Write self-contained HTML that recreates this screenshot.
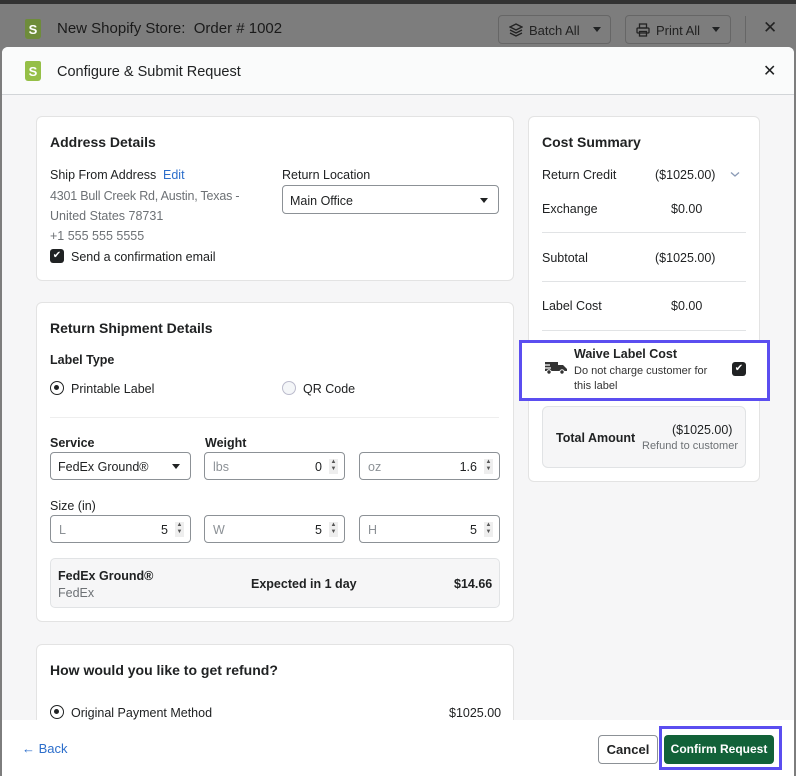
<!DOCTYPE html>
<html><head><meta charset="utf-8"><style>
*{box-sizing:border-box;margin:0;padding:0}
body{width:796px;height:776px;overflow:hidden;background:#7d7d7d;font-family:"Liberation Sans",sans-serif;color:#202223;position:relative;font-size:12.5px}
.a{position:absolute}
.card{position:absolute;background:#fff;border:1px solid #e3e3e3;border-radius:6px}
.h{font-weight:bold;font-size:14px}
.b{font-weight:bold}
.in{position:absolute;border:1px solid #8c9196;border-radius:4px;background:#fff;height:28px}
.ph{position:absolute;left:8px;top:7px;color:#8c9196}
.v{position:absolute;right:22px;top:7px}
.sp{position:absolute;right:6px;top:6px;width:9px;height:15px;background:#eee;font-size:6px;line-height:7px;text-align:center;color:#555}
.caret{position:absolute;width:0;height:0;border-left:4px solid transparent;border-right:4px solid transparent;border-top:5px solid #202223}
.gray{color:#6d7175}
.line{position:absolute;height:1px;background:#e1e3e5}
.logo{position:absolute;width:16px;height:20px;background:#95bf47;border-radius:2px 2px 3px 3px;color:#fff;font-weight:bold;font-size:13px;text-align:center;line-height:21px}
</style></head><body>
<div class="a" style="left:0;top:0;width:796px;height:4px;background:#333"></div>
<div class="logo" style="left:25px;top:19px;background:#6e8c3a">S</div>
<div class="a" style="left:57px;top:20px;font-size:15px;color:#1a1a1a">New Shopify Store:&nbsp; Order # 1002</div>
<div class="a" style="left:498px;top:15px;width:113px;height:29px;border:1px solid #666;border-radius:4px;"><span class="a" style="left:30px;top:7px;font-size:13px;color:#222">Batch All</span><svg class="a" style="left:10px;top:7px" width="14" height="14" viewBox="0 0 14 14" fill="none" stroke="#222" stroke-width="1.3"><path d="M7 1L13 4L7 7L1 4Z"/><path d="M1 7L7 10L13 7"/><path d="M1 10L7 13L13 10"/></svg><div class="caret" style="left:94px;top:11px"></div></div>
<div class="a" style="left:625px;top:15px;width:106px;height:29px;border:1px solid #666;border-radius:4px;"><span class="a" style="left:30px;top:7px;font-size:13px;color:#222">Print All</span><svg class="a" style="left:10px;top:7px" width="14" height="14" viewBox="0 0 14 14" fill="none" stroke="#222" stroke-width="1.3"><rect x="3.5" y="1" width="7" height="4"/><rect x="1" y="5" width="12" height="5" rx="1"/><rect x="3.5" y="8.5" width="7" height="4.5"/></svg><div class="caret" style="left:86px;top:11px"></div></div>
<div class="a" style="left:745px;top:16px;width:1px;height:27px;background:#666"></div>
<div class="a" style="left:763px;top:18px;font-size:17px;color:#222">✕</div>

<div class="a" style="left:2px;top:47px;width:792px;height:729px;background:#f6f6f7;border-radius:6px 6px 0 0;overflow:hidden">
 <div class="a" style="left:0;top:0;width:792px;height:48px;background:#fafbfb;border-bottom:1px solid #d2d5d8"></div>
</div>
<div class="logo" style="left:25px;top:61px">S</div>
<div class="a" style="left:57px;top:64px;font-size:14.5px">Configure &amp; Submit Request</div>
<div class="a" style="left:763px;top:61px;font-size:16px">✕</div>

<div class="card" style="left:36px;top:116px;width:478px;height:165px"></div>
<div class="a h" style="left:50px;top:134px">Address Details</div>
<div class="a" style="left:50px;top:168px">Ship From Address</div>
<div class="a" style="left:163px;top:168px;color:#2c6ecb">Edit</div>
<div class="a gray" style="left:50px;top:189px;letter-spacing:-0.2px">4301 Bull Creek Rd, Austin, Texas -</div>
<div class="a gray" style="left:50px;top:209px">United States 78731</div>
<div class="a gray" style="left:50px;top:229px">+1 555 555 5555</div>
<div class="a" style="left:50px;top:249px;width:14px;height:14px;background:#202223;border-radius:3px;color:#fff;font-size:10px;text-align:center;line-height:14px">✔</div>
<div class="a" style="left:71px;top:250px">Send a confirmation email</div>
<div class="a" style="left:282px;top:168px">Return Location</div>
<div class="in" style="left:282px;top:185px;width:217px;height:29px"><span class="a" style="left:7px;top:8px">Main Office</span><div class="caret" style="right:10px;top:12px"></div></div>

<div class="card" style="left:36px;top:302px;width:478px;height:320px"></div>
<div class="a h" style="left:50px;top:320px">Return Shipment Details</div>
<div class="a b" style="left:50px;top:353px">Label Type</div>
<div class="a" style="left:50px;top:381px;width:14px;height:14px;border:1.5px solid #202223;border-radius:50%"><div class="a" style="left:3px;top:3px;width:5px;height:5px;background:#202223;border-radius:50%"></div></div>
<div class="a" style="left:71px;top:382px">Printable Label</div>
<div class="a" style="left:282px;top:381px;width:14px;height:14px;border:1px solid #bbc;border-radius:50%;background:#f4f6f8"></div>
<div class="a" style="left:303px;top:382px">QR Code</div>
<div class="line" style="left:50px;top:417px;width:449px;background:#eee"></div>
<div class="a b" style="left:50px;top:436px">Service</div>
<div class="a b" style="left:205px;top:436px">Weight</div>
<div class="in" style="left:50px;top:452px;width:141px"><span class="a" style="left:7px;top:7px">FedEx Ground®</span><div class="caret" style="right:10px;top:11px"></div></div>
<div class="in" style="left:204px;top:452px;width:141px"><span class="ph">lbs</span><span class="v">0</span><div class="sp">▲<br>▼</div></div>
<div class="in" style="left:359px;top:452px;width:141px"><span class="ph">oz</span><span class="v">1.6</span><div class="sp">▲<br>▼</div></div>
<div class="a" style="left:50px;top:499px">Size (in)</div>
<div class="in" style="left:50px;top:515px;width:141px"><span class="ph">L</span><span class="v">5</span><div class="sp">▲<br>▼</div></div>
<div class="in" style="left:204px;top:515px;width:141px"><span class="ph">W</span><span class="v">5</span><div class="sp">▲<br>▼</div></div>
<div class="in" style="left:359px;top:515px;width:141px"><span class="ph">H</span><span class="v">5</span><div class="sp">▲<br>▼</div></div>
<div class="a" style="left:50px;top:558px;width:450px;height:50px;background:#f6f6f7;border:1px solid #e1e3e5;border-radius:5px"></div>
<div class="a b" style="left:58px;top:569px">FedEx Ground®</div>
<div class="a gray" style="left:58px;top:586px">FedEx</div>
<div class="a b" style="left:251px;top:577px">Expected in 1 day</div>
<div class="a b" style="left:454px;top:577px">$14.66</div>

<div class="card" style="left:36px;top:644px;width:478px;height:100px"></div>
<div class="a h" style="left:50px;top:662px">How would you like to get refund?</div>
<div class="a" style="left:50px;top:705px;width:14px;height:14px;border:1.5px solid #202223;border-radius:50%"><div class="a" style="left:3px;top:3px;width:5px;height:5px;background:#202223;border-radius:50%"></div></div>
<div class="a" style="left:71px;top:706px">Original Payment Method</div>
<div class="a" style="left:449px;top:706px">$1025.00</div>

<div class="card" style="left:528px;top:116px;width:232px;height:366px"></div>
<div class="a h" style="left:542px;top:134px">Cost Summary</div>
<div class="a" style="left:542px;top:168px">Return Credit</div>
<div class="a" style="left:655px;top:168px">($1025.00)</div>
<svg class="a" style="left:730px;top:171px" width="10" height="7" viewBox="0 0 10 7" fill="none" stroke="#8a9ab5" stroke-width="1.3"><path d="M1 1.5L5 5L9 1.5"/></svg>
<div class="a" style="left:542px;top:202px">Exchange</div>
<div class="a" style="left:671px;top:202px">$0.00</div>
<div class="line" style="left:542px;top:232px;width:204px"></div>
<div class="a" style="left:542px;top:251px">Subtotal</div>
<div class="a" style="left:655px;top:251px">($1025.00)</div>
<div class="line" style="left:542px;top:281px;width:204px"></div>
<div class="a" style="left:542px;top:299px">Label Cost</div>
<div class="a" style="left:671px;top:299px">$0.00</div>
<div class="line" style="left:542px;top:330px;width:204px"></div>
<div class="a" style="left:519px;top:340px;width:251px;height:61px;background:#fff;border:3px solid #5b4ef0"></div>
<svg class="a" style="left:542px;top:361px" width="26" height="14" viewBox="0 0 26 14"><path d="M3 1H16V10H3Z M16 4H21L25 8V10H16Z" fill="#333"/><path d="M0 4H8M1 7H9" stroke="#fff" stroke-width="1.2"/><circle cx="7" cy="11" r="2.2" fill="#333" stroke="#fff"/><circle cx="20" cy="11" r="2.2" fill="#333" stroke="#fff"/></svg>
<div class="a b" style="left:574px;top:347px">Waive Label Cost</div>
<div class="a" style="left:574px;top:364px;font-size:11px;line-height:15px;color:#333;width:150px">Do not charge customer for this label</div>
<div class="a" style="left:732px;top:362px;width:14px;height:14px;background:#202223;border-radius:3px;color:#fff;font-size:10px;text-align:center;line-height:14px">✔</div>
<div class="a" style="left:542px;top:406px;width:204px;height:62px;background:#f6f6f7;border:1px solid #e1e3e5;border-radius:6px"></div>
<div class="a b" style="left:556px;top:431px">Total Amount</div>
<div class="a" style="left:672px;top:423px">($1025.00)</div>
<div class="a gray" style="left:642px;top:440px;font-size:11px">Refund to customer</div>

<div class="a" style="left:2px;top:720px;width:792px;height:56px;background:#fff"></div>
<div class="a" style="left:22px;top:741px;color:#2c6ecb;font-size:13px">← Back</div>
<div class="a" style="left:598px;top:735px;width:60px;height:29px;border:1px solid #8c9196;border-radius:4px;text-align:center;line-height:27px;font-weight:bold;font-size:13px">Cancel</div>
<div class="a" style="left:659px;top:726px;width:123px;height:44px;border:3px solid #5b4ef0"></div>
<div class="a" style="left:664px;top:735px;width:110px;height:29px;background:#126239;border-radius:4px;color:#fff;text-align:center;line-height:29px;font-weight:bold;font-size:12px">Confirm Request</div>
</body></html>
